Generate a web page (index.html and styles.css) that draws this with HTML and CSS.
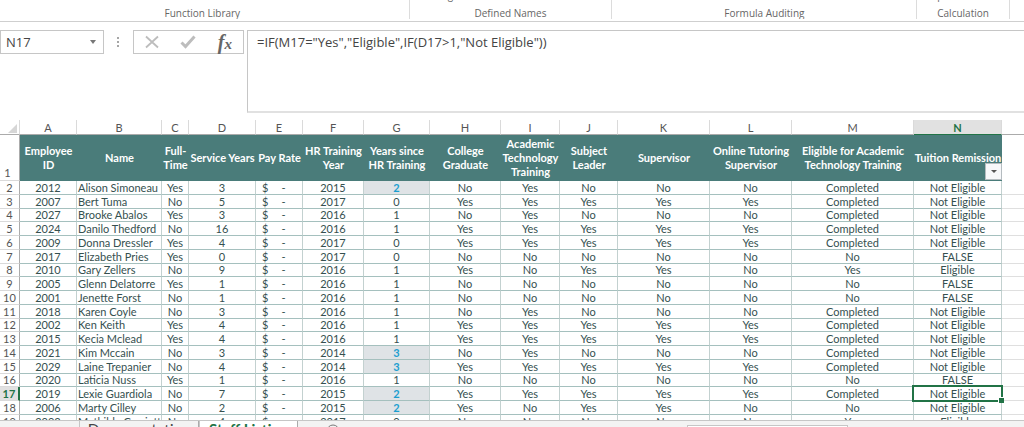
FILE: index.html
```html
<!DOCTYPE html>
<html lang="en">
<head>
<meta charset="utf-8">
<title>Staff Listing</title>
<link rel="stylesheet" href="styles.css">
</head>
<body>
<header class="ribbon">
  <section class="group library"><span class="label">Function Library</span></section>
  <section class="group names"><span class="command">Manager</span><span class="label">Defined Names</span></section>
  <section class="group auditing"><span class="label">Formula Auditing</span></section>
  <section class="group calculation"><span class="command">Options</span><span class="label">Calculation</span></section>
</header>
<div class="formula-bar">
  <div class="name-box">
    <input class="name-input" aria-label="Name box" value="N17">
    <button class="name-toggle" aria-label="Show names"><svg width="6" height="4" viewBox="0 0 6 4"><path d="M0 0h6L3 4z" fill="#777"/></svg></button>
  </div>
  <svg class="grip" width="3" height="11" viewBox="0 0 3 11"><path d="M0 0h2v2H0zM0 4h2v2H0zM0 8h2v2H0z" fill="#a6a6a6"/></svg>
  <div class="entry-tools">
    <button class="tool" aria-label="Cancel"><svg width="16" height="14" viewBox="0 0 16 14"><path d="M2 1.5 14 12.5M14 1.5 2 12.5" stroke="#bdbdbd" stroke-width="1.8" fill="none"/></svg></button>
    <button class="tool" aria-label="Enter"><svg width="16" height="14" viewBox="0 0 16 14"><path d="M1.5 7.5 5.5 11.5 14.5 1.5" stroke="#bdbdbd" stroke-width="3" fill="none"/></svg></button>
    <button class="tool fx" aria-label="Insert function">f<span class="fx-x">x</span></button>
  </div>
  <textarea class="formula" aria-label="Formula" spellcheck="false">=IF(M17="Yes","Eligible",IF(D17&gt;1,"Not Eligible"))</textarea>
</div>
<main class="sheet">
<table class="grid">
<colgroup><col class="c-num"><col class="c-a"><col class="c-b"><col class="c-c"><col class="c-d"><col class="c-e"><col class="c-f"><col class="c-g"><col class="c-h"><col class="c-i"><col class="c-j"><col class="c-k"><col class="c-l"><col class="c-m"><col class="c-n"><col></colgroup>
<thead>
<tr class="letters"><th class="corner"><svg width="9" height="9" viewBox="0 0 9 9"><path d="M9 0v9H0z" fill="#d6d6d6"/></svg><th>A<th>B<th>C<th>D<th>E<th>F<th>G<th>H<th>I<th>J<th>K<th>L<th>M<th class="active">N<th></tr>
<tr class="titles"><th>1<th>Employee ID<th>Name<th>Full-Time<th>Service Years<th>Pay Rate<th>HR Training Year<th>Years since HR Training<th>College Graduate<th>Academic Technology Training<th>Subject Leader<th>Supervisor<th>Online Tutoring Supervisor<th>Eligible for Academic Technology Training<th class="filtered">Tuition Remission<button class="filter" aria-label="Filter Tuition Remission"><svg width="6" height="3" viewBox="0 0 6 3"><path d="M0 0h6L3 3z" fill="#555"/></svg></button><th></tr>
</thead>
<tbody>
<tr><th>2<td>2012<td>Alison Simoneau<td>Yes<td>3<td>$<span class="dash">-</span><td>2015<td class="due">2<td>No<td>Yes<td>No<td>No<td>No<td>Completed<td>Not Eligible<td></tr>
<tr><th>3<td>2007<td>Bert Tuma<td>No<td>5<td>$<span class="dash">-</span><td>2017<td>0<td>Yes<td>Yes<td>Yes<td>Yes<td>Yes<td>Completed<td>Not Eligible<td></tr>
<tr><th>4<td>2027<td>Brooke Abalos<td>Yes<td>3<td>$<span class="dash">-</span><td>2016<td>1<td>No<td>Yes<td>No<td>No<td>No<td>Completed<td>Not Eligible<td></tr>
<tr><th>5<td>2024<td>Danilo Thedford<td>No<td>16<td>$<span class="dash">-</span><td>2016<td>1<td>Yes<td>Yes<td>Yes<td>Yes<td>Yes<td>Completed<td>Not Eligible<td></tr>
<tr><th>6<td>2009<td>Donna Dressler<td>Yes<td>4<td>$<span class="dash">-</span><td>2017<td>0<td>Yes<td>Yes<td>Yes<td>Yes<td>Yes<td>Completed<td>Not Eligible<td></tr>
<tr><th>7<td>2017<td>Elizabeth Pries<td>Yes<td>0<td>$<span class="dash">-</span><td>2017<td>0<td>No<td>No<td>No<td>No<td>No<td>No<td>FALSE<td></tr>
<tr><th>8<td>2010<td>Gary Zellers<td>No<td>9<td>$<span class="dash">-</span><td>2016<td>1<td>Yes<td>No<td>Yes<td>Yes<td>No<td>Yes<td>Eligible<td></tr>
<tr><th>9<td>2005<td>Glenn Delatorre<td>Yes<td>1<td>$<span class="dash">-</span><td>2016<td>1<td>No<td>No<td>No<td>No<td>No<td>No<td>FALSE<td></tr>
<tr><th>10<td>2001<td>Jenette Forst<td>No<td>1<td>$<span class="dash">-</span><td>2016<td>1<td>No<td>No<td>No<td>No<td>No<td>No<td>FALSE<td></tr>
<tr><th>11<td>2018<td>Karen Coyle<td>No<td>3<td>$<span class="dash">-</span><td>2016<td>1<td>No<td>Yes<td>No<td>No<td>No<td>Completed<td>Not Eligible<td></tr>
<tr><th>12<td>2002<td>Ken Keith<td>Yes<td>4<td>$<span class="dash">-</span><td>2016<td>1<td>Yes<td>Yes<td>Yes<td>Yes<td>Yes<td>Completed<td>Not Eligible<td></tr>
<tr><th>13<td>2015<td>Kecia Mclead<td>Yes<td>4<td>$<span class="dash">-</span><td>2016<td>1<td>Yes<td>Yes<td>Yes<td>Yes<td>Yes<td>Completed<td>Not Eligible<td></tr>
<tr><th>14<td>2021<td>Kim Mccain<td>No<td>3<td>$<span class="dash">-</span><td>2014<td class="due">3<td>No<td>Yes<td>No<td>No<td>No<td>Completed<td>Not Eligible<td></tr>
<tr><th>15<td>2029<td>Laine Trepanier<td>No<td>4<td>$<span class="dash">-</span><td>2014<td class="due">3<td>Yes<td>Yes<td>Yes<td>Yes<td>Yes<td>Completed<td>Not Eligible<td></tr>
<tr><th>16<td>2020<td>Laticia Nuss<td>Yes<td>1<td>$<span class="dash">-</span><td>2016<td>1<td>No<td>No<td>No<td>No<td>No<td>No<td>FALSE<td></tr>
<tr><th class="active">17<td>2019<td>Lexie Guardiola<td>No<td>7<td>$<span class="dash">-</span><td>2015<td class="due">2<td>Yes<td>Yes<td>Yes<td>Yes<td>Yes<td>Completed<td class="selected">Not Eligible<td></tr>
<tr><th>18<td>2006<td>Marty Cilley<td>No<td>2<td>$<span class="dash">-</span><td>2015<td class="due">2<td>Yes<td>No<td>Yes<td>Yes<td>No<td>No<td>Not Eligible<td></tr>
<tr><th>19<td>2003<td>Mathilde Corriette<td>No<td>4<td>$<span class="dash">-</span><td>2017<td>0<td>No<td>No<td>No<td>No<td>No<td>Yes<td>Eligible<td></tr>
</tbody>
</table>
</main>
<footer class="tabs">
  <button class="tab">Documentation</button>
  <button class="tab current">Staff Listing</button>
  <button class="add" aria-label="New sheet"><svg width="14" height="14" viewBox="0 0 14 14"><circle cx="7" cy="7" r="6" fill="none" stroke="#777"/><path d="M7 4v6M4 7h6" stroke="#777"/></svg></button>
  <div class="track"><div class="thumb"></div></div>
</footer>
</body>
</html>
```
FILE: styles.css
```css
* { box-sizing: border-box; }
body {
  margin: 0;
  height: 100vh;
  display: flex;
  flex-direction: column;
  overflow: hidden;
  background: #fff;
  color: #444;
  font-family: "Open Sans", sans-serif;
}
button, input, textarea { margin: 0; padding: 0; border: 0; background: none; color: inherit; font: inherit; outline: none; }

.ribbon {
  flex: none;
  display: flex;
  height: 22px;
  border-bottom: 1px solid #cfcfcf;
}
.group {
  display: flex;
  flex-direction: column;
  justify-content: flex-end;
  height: 19px;
  overflow: hidden;
  border-right: 1px solid #dcdcdc;
  font-size: 10px;
  line-height: 12px;
  color: #666;
}
.library { width: 40%; }
.names { width: 19.8%; }
.auditing { width: 29.8%; }
.calculation { width: 9%; }
.label { text-align: center; white-space: nowrap; }
.library .label { padding-right: 4px; }
.command { flex: none; padding-left: 12px; margin-bottom: 6px; }

.formula-bar {
  flex: none;
  display: flex;
  align-items: flex-start;
  padding-top: 8px;
  height: 98px;
}
.name-box {
  display: flex;
  width: 104px;
  height: 24px;
  border: 1px solid #c6c6c6;
}
.name-input { flex: 1; min-width: 0; padding-left: 5px; font-family: "Open Sans", sans-serif; font-size: 13px; }
.name-toggle, .tool { display: flex; align-items: center; justify-content: center; }
.name-toggle { width: 20px; }
.grip { margin: 7px 13px 0 13px; }
.entry-tools {
  display: flex;
  width: 111px;
  height: 24px;
  border: 1px solid #c6c6c6;
}
.tool { flex: 1; }
.fx { font: italic bold 20px/20px "Liberation Serif", serif; color: #666; }
.fx-x { font-size: 15px; padding-top: 4px; }
.formula {
  flex: 1;
  height: 83px;
  margin-left: 3px;
  padding: 3px 9px;
  border: 1px solid #c6c6c6;
  border-right: 0;
  border-bottom: 2px solid #e1e1e1;
  resize: none;
  overflow: hidden;
  font-size: 13px;
  line-height: 17px;
}

.sheet { flex: 1; min-height: 0; overflow: hidden; }
.grid {
  width: 100%;
  table-layout: fixed;
  border-collapse: separate;
  border-spacing: 0;
  font-family: Lato, sans-serif;
  font-size: 11px;
  line-height: 12px;
  color: #35504f;
}
.grid th, .grid td { padding: 0; text-align: center; white-space: nowrap; }
.c-num { width: 20px; }
.c-a { width: 57px; }
.c-b { width: 85px; }
.c-c { width: 27px; }
.c-d { width: 67px; }
.c-e { width: 47px; }
.c-f { width: 61px; }
.c-g { width: 66px; }
.c-h { width: 71px; }
.c-i { width: 59px; }
.c-j { width: 58px; }
.c-k { width: 92px; }
.c-l { width: 82px; }
.c-m { width: 122px; }
.c-n { width: 88px; }

.grid .letters th {
  height: 15px;
  padding-top: 2px;
  border-right: 1px solid #dadada;
  border-bottom: 1px solid #ababab;
  font-weight: 400;
  color: #555;
}
.grid .letters th:last-child { border-right: 0; }
.grid .letters .corner { padding-right: 2px; }
.corner svg { display: block; margin-left: auto; }
.grid .letters .active { background: #e1e1e1; border-bottom-color: #217346; color: #217346; font-weight: 700; }

.titles th {
  height: 46px;
  background: #4a7c7a;
  color: #fff;
  font-weight: 700;
  line-height: 14px;
}
.grid .titles th { white-space: normal; }
.titles th:last-child { background: #fff; }
.grid .titles .filtered { position: relative; white-space: nowrap; }
.filter {
  position: absolute;
  right: 0;
  bottom: 1px;
  width: 17px;
  height: 17px;
  display: flex;
  align-items: center;
  justify-content: center;
  background: #f7f8fa;
  border: 1px solid #b5bcc0;
}

tbody td {
  height: 14px;
  border-right: 1px solid #c3d1d0;
  border-bottom: 1px solid #a5c0be;
}
tbody tr:nth-child(4n+3) td { height: 13px; }
tbody td:last-child { border-right: 0; border-bottom-color: #dfdfdf; }
.grid tbody td:nth-child(3) { text-align: left; padding-left: 1px; overflow: hidden; }
.grid tbody td:nth-child(6) { text-align: left; padding-left: 6px; }
.dash { margin-left: 13px; }
tbody th, .titles th:first-child {
  background: #fff;
  border-right: 1px solid #ababab;
  border-bottom: 1px solid #dadada;
  font-weight: 400;
  color: #555;
}
.grid .titles th:first-child { vertical-align: bottom; padding-right: 4px; }
tbody .active { background: #e1e1e1; border-right: 2px solid #217346; color: #217346; font-weight: 700; }
.due { background: #dfe3e6; color: #1c9fd0; font-weight: 700; }
.selected { position: relative; }
.selected::before {
  content: "";
  position: absolute;
  inset: -2px;
  border: 2px solid #217346;
}
.selected::after {
  content: "";
  position: absolute;
  right: -3px;
  bottom: -3px;
  width: 5px;
  height: 5px;
  background: #217346;
  border-left: 1px solid #fff;
  border-top: 1px solid #fff;
}

.tabs {
  flex: none;
  display: flex;
  align-items: flex-start;
  height: 7px;
  overflow: hidden;
  padding-left: 79px;
  background: #f3f3f3;
  border-top: 1px solid #c6c6c6;
  font-family: Lato, sans-serif;
  font-size: 15px;
  line-height: 16px;
}
.tab { width: 120px; border-left: 1px solid #c6c6c6; border-right: 1px solid #ababab; }
.current { width: 99px; background: #fff; color: #217346; font-weight: 700; }
.add { width: 70px; padding-top: 3px; }
.track { flex: 1; padding: 4px 176px 0 319px; }
.thumb { height: 16px; background: #fff; border: 1px solid #c6c6c6; }
```
